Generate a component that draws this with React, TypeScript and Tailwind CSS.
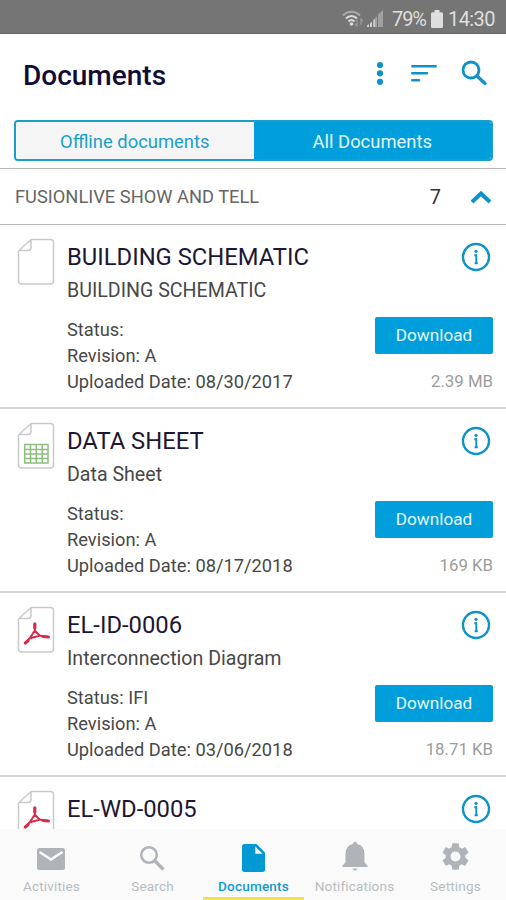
import React from "react";
import { MdSettings } from "react-icons/md";

type FileKind = "blank" | "sheet" | "pdf";

interface DocumentDetails {
  description: string;
  status: string;
  revision: string;
  uploaded: string;
  size: string;
}

interface DocumentItem {
  title: string;
  kind: FileKind;
  details?: DocumentDetails;
}

const documents: DocumentItem[] = [
  {
    title: "BUILDING SCHEMATIC",
    kind: "blank",
    details: {
      description: "BUILDING SCHEMATIC",
      status: "",
      revision: "A",
      uploaded: "08/30/2017",
      size: "2.39 MB",
    },
  },
  {
    title: "DATA SHEET",
    kind: "sheet",
    details: {
      description: "Data Sheet",
      status: "",
      revision: "A",
      uploaded: "08/17/2018",
      size: "169 KB",
    },
  },
  {
    title: "EL-ID-0006",
    kind: "pdf",
    details: {
      description: "Interconnection Diagram",
      status: "IFI",
      revision: "A",
      uploaded: "03/06/2018",
      size: "18.71 KB",
    },
  },
  { title: "EL-WD-0005", kind: "pdf" },
];

const FileIcon: React.FC<{ kind: FileKind }> = ({ kind }) => (
  <svg width="38" height="48" viewBox="0 0 38 48" fill="none" className="shrink-0">
    <path
      d="M14 1.5H33.5Q36.5 1.5 36.5 4.5V43Q36.5 46 33.5 46H4.5Q1.5 46 1.5 43V13ZM14 1.5V9.5Q14 12.5 11 12.5H1.5"
      stroke="#cacaca"
      strokeWidth="1.5"
      strokeLinejoin="round"
    />
    {kind === "sheet" && (
      <path
        d="M7.7 22.5H31V41H7.7ZM7.7 27.5H31M7.7 32H31M7.7 36.5H31M13.5 22.5V41M19.3 22.5V41M25.2 22.5V41"
        stroke="#8fbd80"
        strokeWidth="1.5"
      />
    )}
    {kind === "pdf" && (
      <g stroke="#d92b4b" strokeLinecap="round" strokeLinejoin="round">
        <path d="M17.8 18V24.5L13 32L8.5 37M17.8 24.5L22.5 29.5L31.5 31M13 32.3L22.5 29.8" strokeWidth="2" />
        <path d="M17.8 17.8V22M26 30.5L31.3 31M8.3 37L11 34.8" strokeWidth="3.2" />
      </g>
    )}
  </svg>
);

const InfoIcon = () => (
  <svg width="30" height="30" viewBox="0 0 30 30" fill="none">
    <circle cx="15" cy="15" r="13" stroke="#0f93c6" strokeWidth="2.4" />
    <circle cx="15" cy="9.3" r="1.6" fill="#0f93c6" />
    <path d="M13.3 13.2H15.3V21.2M13.6 21.2H16.8" stroke="#0f93c6" strokeWidth="1.9" />
  </svg>
);

const StatusBar = () => (
  <div className="flex h-[34px] shrink-0 items-center justify-end border-b border-[#666] bg-[#757575] pr-[11px] pt-1 text-[#dedede]">
    <svg width="22" height="20" viewBox="0 0 22 20" fill="none" className="mr-[3px]">
      <path d="M1 6.5C6 1.5 13 1.5 18 6.5" stroke="#aaa" strokeWidth="2" />
      <path d="M4 9.5C7.5 6 11.5 6 15 9.5M6.5 12.5C8.5 10.5 10.5 10.5 12.5 12.5" stroke="currentColor" strokeWidth="2" />
      <circle cx="9.5" cy="15" r="1.8" fill="currentColor" />
      <path d="M15 11V17L13 15M19 16V10L21 12" stroke="#999" strokeWidth="1.3" />
    </svg>
    <svg width="17" height="18" viewBox="0 0 17 18" className="mr-2">
      <path d="M11 4.5L16 0V17H11ZM6 10L10 6.3V17H6Z" fill="#a0a0a0" />
      <path d="M0 15.5L2 14V17H0ZM3 13.5L5 11.5V17H3ZM6.5 10.5L8 9V17H6.5Z" fill="#cfcfcf" />
    </svg>
    <span className="mr-[3px] w-[36px] whitespace-nowrap text-[20px] leading-5 tracking-[-1.1px]">79%</span>
    <svg width="12" height="18" viewBox="0 0 12 18" fill="currentColor" className="mr-[5px]">
      <path d="M3.5 0H8.5V2.2H10.5Q12 2.2 12 3.7V16.5Q12 18 10.5 18H1.5Q0 18 0 16.5V3.7Q0 2.2 1.5 2.2H3.5Z" />
    </svg>
    <span className="w-[47px] whitespace-nowrap text-[20px] leading-5 tracking-[-0.6px]">14:30</span>
  </div>
);

const Header = () => (
  <header className="flex h-[86px] shrink-0 items-start justify-between pl-[23px] pr-[19px] pt-[26px]">
    <h1 className="text-[28px] font-medium leading-[31px] text-[#120c35]">Documents</h1>
    <div className="flex items-start text-[#0f93c6]">
      <svg width="8" height="26" viewBox="0 0 8 26" fill="currentColor" className="mr-[27px]">
        <circle cx="4" cy="5" r="3.1" />
        <circle cx="4" cy="13.3" r="3.1" />
        <circle cx="4" cy="21.8" r="3.1" />
      </svg>
      <svg width="26" height="26" viewBox="0 0 26 26" fill="none" className="mr-6">
        <path d="M1.3 6.3H24.7M1.3 13.3H16M1.3 20.3H8" stroke="currentColor" strokeWidth="2.6" strokeLinecap="round" />
      </svg>
      <svg width="26" height="26" viewBox="0 0 26 26" fill="none">
        <circle cx="10" cy="10" r="8" stroke="currentColor" strokeWidth="2.8" />
        <path d="M16 16L24 23.5" stroke="currentColor" strokeWidth="3.2" strokeLinecap="round" />
      </svg>
    </div>
  </header>
);

const DocumentRow: React.FC<{ doc: DocumentItem }> = ({ doc }) => {
  const { title, kind, details } = doc;

  return (
    <li className="flex shrink-0 items-start pl-[17px] pr-[13px] pt-[13px] not-last:h-[184px] not-last:border-b-2 not-last:border-[#d6d6d6]">
      <FileIcon kind={kind} />
      <div className="ml-[12px] flex-1 whitespace-nowrap text-[#484848]">
        <h2 className="mt-[5px] text-[23.8px] leading-[29px] text-[#1c1735]">{title}</h2>
        {details && (
          <>
            <p className="mt-[7px] text-[19.6px] leading-6">{details.description}</p>
            <div className="mt-[14px] text-[18.3px] leading-[26.2px]">
              <p>Status: {details.status}</p>
              <p>Revision: {details.revision}</p>
              <p>Uploaded Date: {details.uploaded}</p>
            </div>
          </>
        )}
      </div>
      <div className="flex flex-col items-end">
        <button className="mr-[2px] mt-[4px]">
          <InfoIcon />
        </button>
        {details && (
          <>
            <button className="mt-[45px] h-[37px] w-[118px] rounded-[2px] bg-[#009fdb] pt-px text-[17.2px] text-[#e4f6fd]">
              Download
            </button>
            <span className="mt-[17px] text-[16.8px] leading-5 text-[#9c9c9c]">{details.size}</span>
          </>
        )}
      </div>
    </li>
  );
};

interface NavItemProps {
  label: string;
  active?: boolean;
  children: React.ReactNode;
}

const NavItem: React.FC<NavItemProps> = ({ label, active, children }) => (
  <button
    className={`flex flex-1 flex-col items-center border-b-[3px] pt-[14px] text-[13.6px] leading-4 ${
      active ? "border-[#f5e04c] font-medium text-[#0f9bd0]" : "border-transparent text-[#b9bcbf]"
    }`}
  >
    <span className="flex h-[30px] items-center justify-center">{children}</span>
    <span className="mt-[5px] tracking-[0.15px]">{label}</span>
  </button>
);

const BottomNav = () => (
  <nav className="flex h-[71px] shrink-0 bg-[#fafafa] pl-px">
    <NavItem label="Activities">
      <svg width="28" height="24" viewBox="0 0 28 24" className="mt-px -ml-px">
        <rect y="1" width="28" height="22" rx="2.5" fill="#b0b4b9" />
        <path d="M2.5 5L14 12.5L25.5 5" stroke="#fafafa" strokeWidth="2.6" fill="none" />
      </svg>
    </NavItem>
    <NavItem label="Search">
      <svg width="26" height="26" viewBox="0 0 26 26" fill="none" stroke="#b0b4b9" className="-ml-px">
        <circle cx="10" cy="10" r="7.8" strokeWidth="2.6" />
        <path d="M16 16L24.5 24.5" strokeWidth="3.2" />
      </svg>
    </NavItem>
    <NavItem label="Documents" active>
      <svg width="23" height="28" viewBox="0 0 23 28">
        <path d="M2.5 0H14.5L23 8.5V25.5Q23 28 20.5 28H2.5Q0 28 0 25.5V2.5Q0 0 2.5 0Z" fill="#0099d4" />
        <path d="M13.3 2.5V9.7H20.5Z" fill="#fafafa" />
      </svg>
    </NavItem>
    <NavItem label="Notifications">
      <svg width="26" height="30" viewBox="0 0 26 30" fill="#b0b4b9" className="-mt-1">
        <path d="M13 0.5Q15 0.5 15.2 3Q22.5 4.5 22.5 13V21.5L25.5 24.5V26H0.5V24.5L3.5 21.5V13Q3.5 4.5 10.8 3Q11 0.5 13 0.5ZM10.5 27.5H15.5Q15 29.5 13 29.5Q11 29.5 10.5 27.5Z" />
      </svg>
    </NavItem>
    <NavItem label="Settings">
      <MdSettings className="-mt-1 h-[33px] w-[33px] text-[#b0b4b9]" />
    </NavItem>
  </nav>
);

const App = () => {
  return (
    <div className="flex h-[900px] w-[506px] flex-col overflow-hidden bg-white font-['Roboto',sans-serif]">
      <StatusBar />
      <Header />

      {/* Document filter */}
      <div className="ml-[14px] mr-[13px] flex h-[41px] shrink-0 overflow-hidden rounded-[4px] border-2 border-[#1b9fca] text-[18.4px]">
        <button className="flex-1 bg-[#f5f5f5] pt-[3px] text-[#1b9fca]">Offline documents</button>
        <button className="flex-1 bg-[#009fdb] pt-[3px] text-[#e4f6fd]">All Documents</button>
      </div>

      {/* Project group */}
      <section className="mt-[7px] flex h-[57px] shrink-0 items-center justify-between border-y border-[#b5b9b9] pl-[15px] pr-[14px]">
        <span className="text-[18.3px] text-[#666]">FUSIONLIVE SHOW AND TELL</span>
        <div className="flex items-center gap-[29px]">
          <span className="text-[20px] text-[#333]">7</span>
          <svg width="22" height="14" viewBox="0 0 22 14" fill="none">
            <path d="M2 12L11 3.5L20 12" stroke="#0f93c6" strokeWidth="4" />
          </svg>
        </div>
      </section>

      <ul className="flex min-h-0 flex-1 flex-col overflow-hidden">
        {documents.map((doc) => (
          <DocumentRow key={doc.title} doc={doc} />
        ))}
      </ul>

      <BottomNav />
    </div>
  );
};

export default App;
